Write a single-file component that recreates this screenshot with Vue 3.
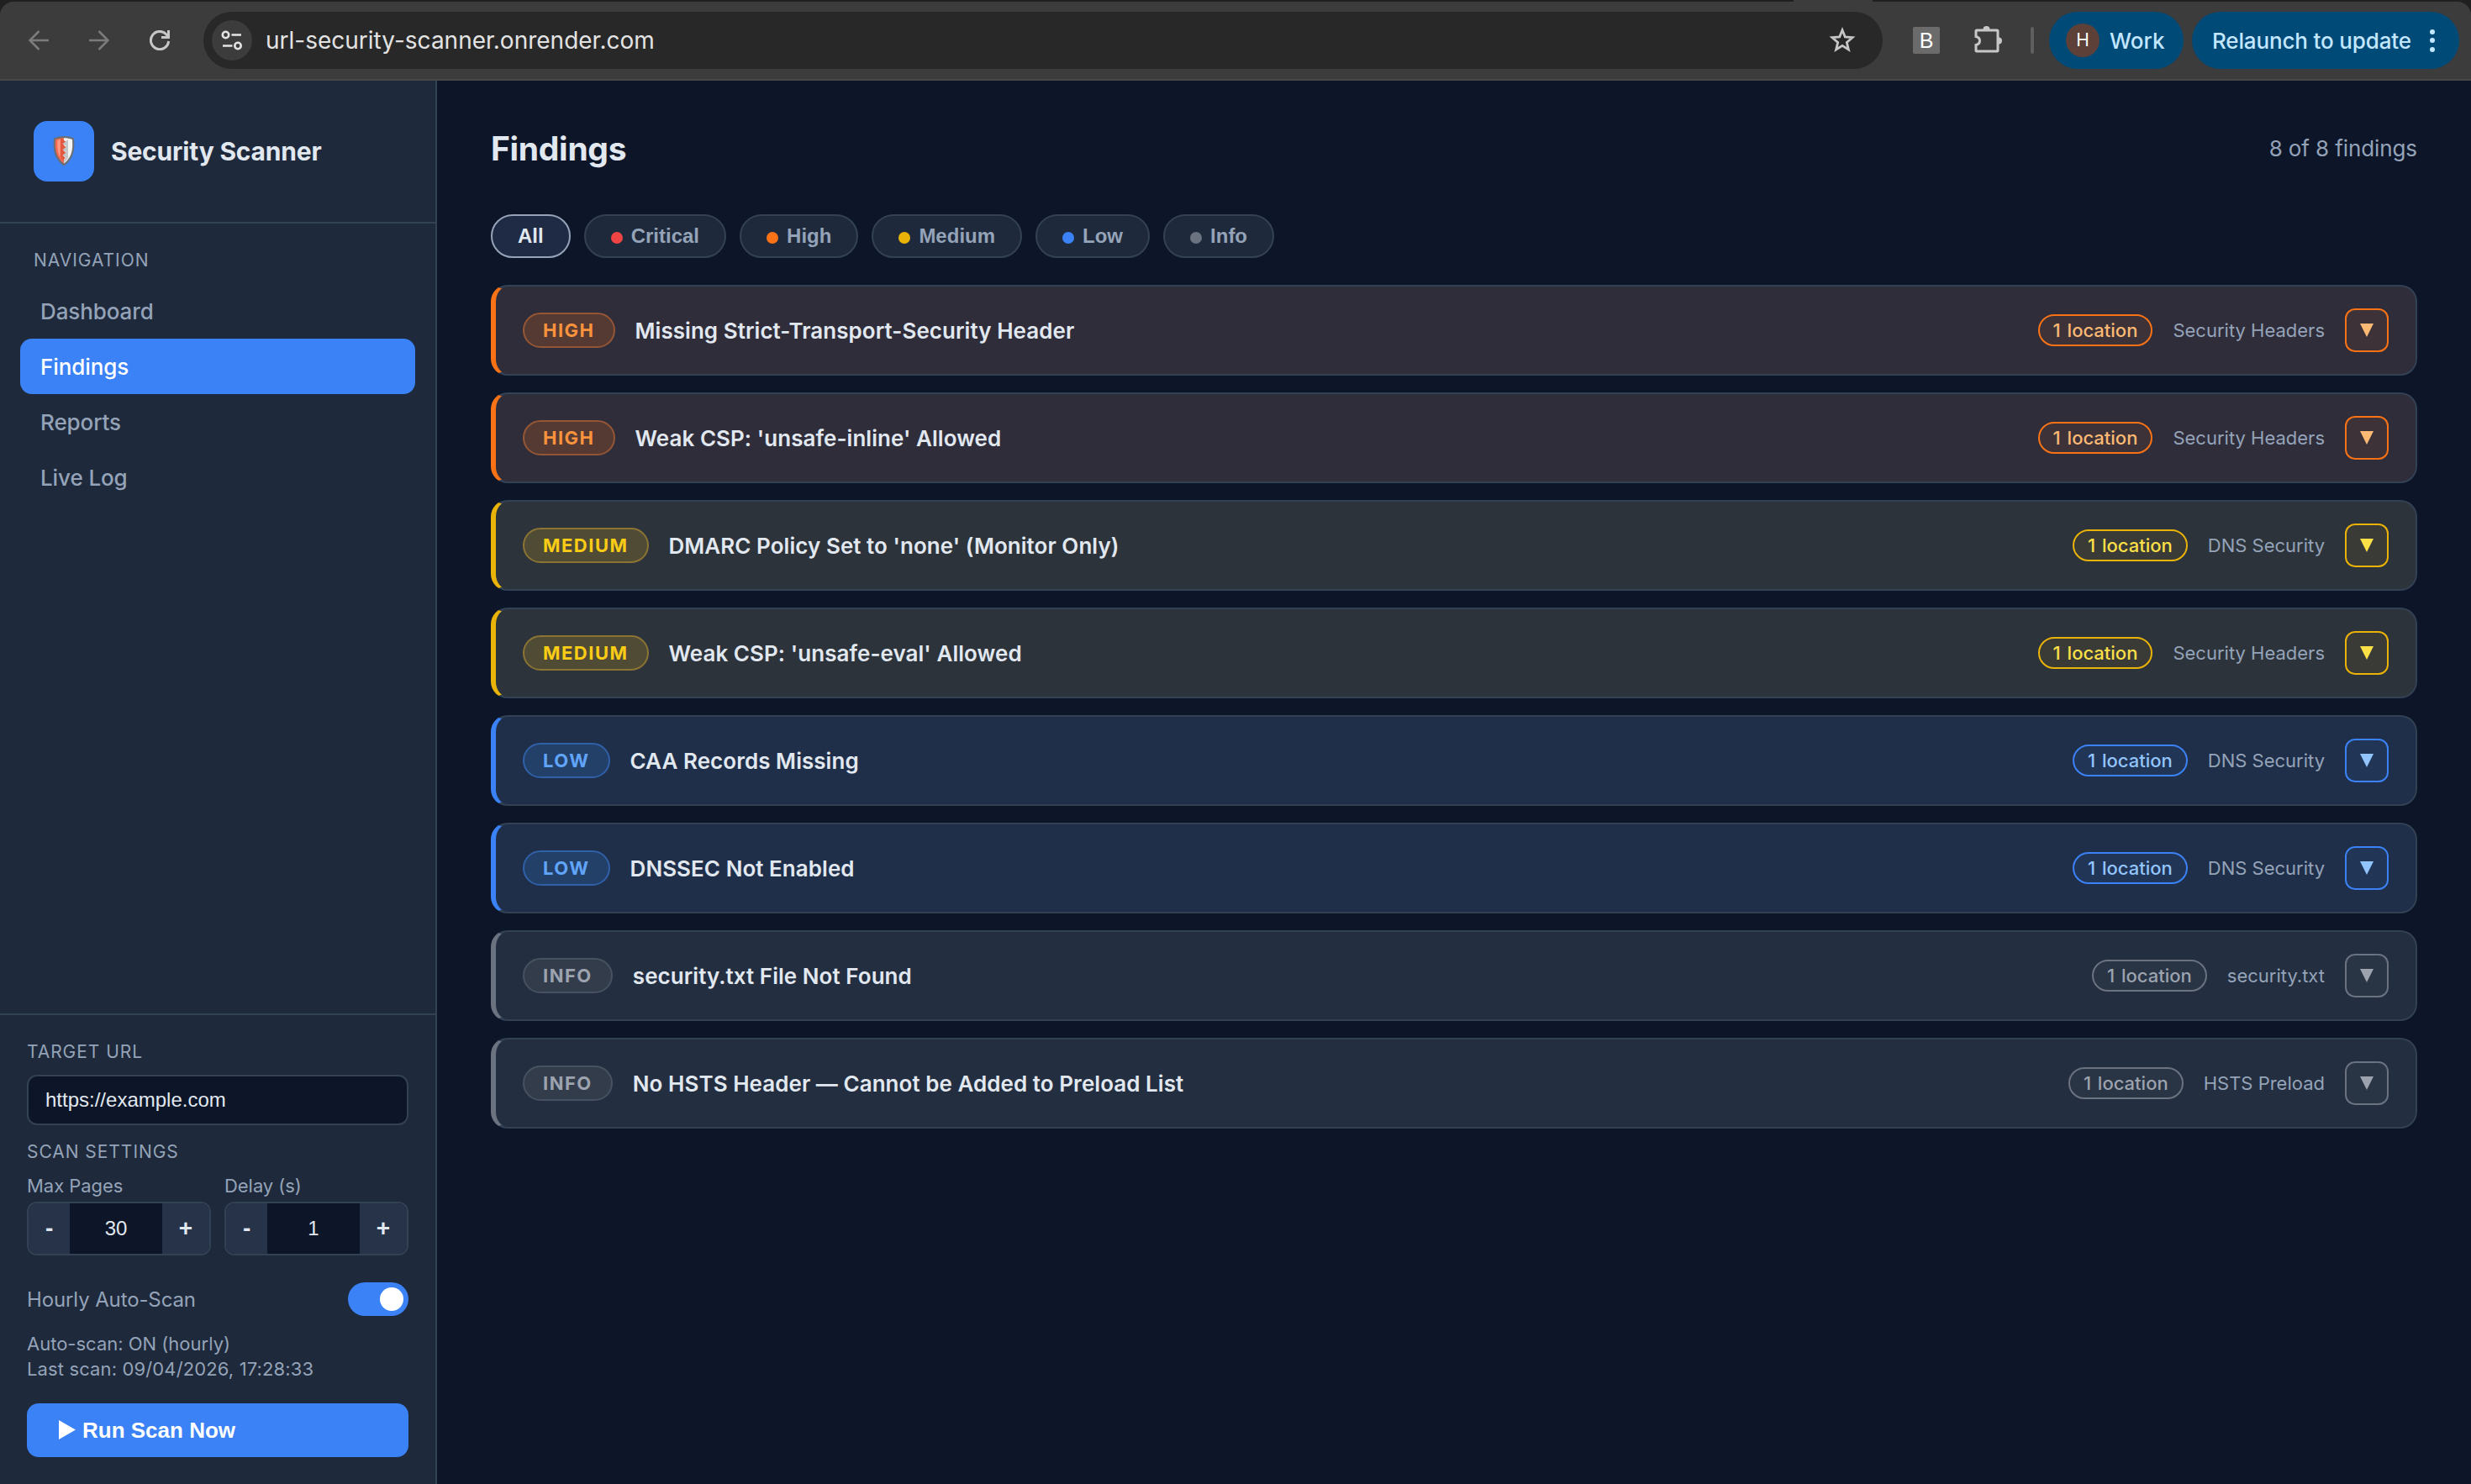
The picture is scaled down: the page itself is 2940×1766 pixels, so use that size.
<script setup>
import { ref } from 'vue'

const navItems = ['Dashboard', 'Findings', 'Reports', 'Live Log']
const activeNav = ref('Findings')

const filters = [
  { label: 'All', tone: '' },
  { label: 'Critical', tone: 'critical' },
  { label: 'High', tone: 'high' },
  { label: 'Medium', tone: 'medium' },
  { label: 'Low', tone: 'low' },
  { label: 'Info', tone: 'info' },
]
const activeFilter = ref('All')

const findings = [
  { severity: 'high', title: 'Missing Strict-Transport-Security Header', category: 'Security Headers' },
  { severity: 'high', title: "Weak CSP: 'unsafe-inline' Allowed", category: 'Security Headers' },
  { severity: 'medium', title: "DMARC Policy Set to 'none' (Monitor Only)", category: 'DNS Security' },
  { severity: 'medium', title: "Weak CSP: 'unsafe-eval' Allowed", category: 'Security Headers' },
  { severity: 'low', title: 'CAA Records Missing', category: 'DNS Security' },
  { severity: 'low', title: 'DNSSEC Not Enabled', category: 'DNS Security' },
  { severity: 'info', title: 'security.txt File Not Found', category: 'security.txt' },
  { severity: 'info', title: 'No HSTS Header — Cannot be Added to Preload List', category: 'HSTS Preload' },
]

const steppers = [
  { label: 'Max Pages', value: 30 },
  { label: 'Delay (s)', value: 1 },
]
</script>

<template>
  <div class="window">
    <header class="chrome">
      <div class="tab-strip"><span class="strip-left"></span><span class="strip-right"></span></div>
      <div class="toolbar">
        <svg class="tool-icon back" viewBox="0 0 24 24"><path d="M24 12H2M12.5 1L1.5 12l11 11" /></svg>
        <svg class="tool-icon forward" viewBox="0 0 24 24"><path d="M0 12h22M11.5 1l11 11-11 11" /></svg>
        <svg class="tool-icon reload" viewBox="0 0 24 24"><path d="M22.6 13A10.6 10.6 0 1 1 20 5L22 7.500" /><path d="M22.500 0v8.500H14" /></svg>
        <div class="omnibox">
          <span class="site-info">
            <svg viewBox="0 0 26 26"><circle cx="5.500" cy="6.500" r="3.700" /><path d="M12.500 6.500H24M2 19.500h11.500" /><circle cx="20" cy="19.500" r="3.700" /></svg>
          </span>
          <span class="address">url-security-scanner.onrender.com</span>
          <svg class="star" viewBox="0 0 32 32"><path d="M16 3.800l3.300 8.200 8.700.7-6.700 5.700 2.100 8.600-7.400-4.600-7.400 4.600 2.100-8.600L4 12.700l8.700-.7z" /></svg>
        </div>
        <span class="ext-b">B</span>
        <svg class="puzzle" viewBox="0 0 34 34"><path class="piece" d="M4 6h24a1 1 0 0 1 1 1v23a1 1 0 0 1-1 1H4a1 1 0 0 1-1-1v-6.500c6-1.500 6-8.500 0-10V7a1 1 0 0 1 1-1z" /><path class="knob-fill" d="M11.500 5a4 4 0 0 1 8 0zM30 14.500a4 4 0 0 1 0 8z" /></svg>
        <span class="divider"></span>
        <div class="profile"><span class="avatar">H</span><span class="profile-name">Work</span></div>
        <div class="relaunch"><span class="relaunch-text">Relaunch to update</span><span class="dots"><i></i><i></i><i></i></span></div>
      </div>
    </header>

    <div class="app">
      <aside class="sidebar">
        <div class="brand">
          <div class="logo">
            <svg viewBox="0 0 26 36">
              <path fill="#6b6f76" d="M13 0c4 0 8.500.8 12 2.500 1.500 15-1 25-12 33C2 27.500-.5 17.500 1 2.500 4.500.8 9 0 13 0z" />
              <path fill="#f4f4f4" d="M13 2.200c3.500 0 7 .6 10 1.800 1 13-1 21.800-10 28.600z" />
              <path fill="#f4694f" d="M13 2.200c-3.500 0-7 .6-10 1.800-1 13 1 21.800 10 28.600z" />
              <path fill="#ff9a80" d="M5.500 5c1.500-.6 2.500-.8 3.500-.9L8.500 25c-3-5-3.600-11-3-20z" />
              <path fill="#c3c6c9" d="M16 5.500l-5.500 3L16 12l-5.500 3.500L16 19l-5.500 3.500L16 26l-3 2.500V32l5-6V4z" />
              <path fill="#e25840" d="M10.500 3l4.500 3.500-4 3 4.500 3.500-4.500 3.500 4.500 3-4.500 3.500 4 3L11.500 29 9 24V3z" />
            </svg>
          </div>
          <span class="brand-name">Security Scanner</span>
        </div>

        <nav class="nav">
          <div class="section-label nav-label">NAVIGATION</div>
          <a v-for="item in navItems" :key="item" class="nav-item" :class="{ active: item === activeNav }" @click="activeNav = item">{{ item }}</a>
        </nav>

        <div class="controls">
          <div class="section-label">TARGET URL</div>
          <div class="url-input">https://example.com</div>
          <div class="section-label settings-label">SCAN SETTINGS</div>
          <div class="stepper-row">
            <div v-for="s in steppers" :key="s.label" class="stepper-field">
              <span class="stepper-label">{{ s.label }}</span>
              <div class="stepper">
                <span class="step-btn">-</span>
                <span class="step-value">{{ s.value }}</span>
                <span class="step-btn">+</span>
              </div>
            </div>
          </div>
          <div class="auto-row">
            <span class="auto-label">Hourly Auto-Scan</span>
            <span class="toggle"><span class="knob"></span></span>
          </div>
          <div class="status">
            <div class="status-mode">Auto-scan: ON (hourly)</div>
            <div class="status-last">Last scan: 09/04/2026, 17:28:33</div>
          </div>
          <div class="run">
            <svg viewBox="0 0 20 23"><path d="M0 0l20 11.500L0 23z" /></svg>
            <span>Run Scan Now</span>
          </div>
        </div>
      </aside>

      <main class="main">
        <div class="head">
          <h1>Findings</h1>
          <span class="count">8 of 8 findings</span>
        </div>
        <div class="filters">
          <span v-for="f in filters" :key="f.label" class="filter" :class="{ active: f.label === activeFilter }" @click="activeFilter = f.label">
            <i v-if="f.tone" class="dot" :class="f.tone"></i>{{ f.label }}
          </span>
        </div>
        <div class="list">
          <article v-for="f in findings" :key="f.title" class="card" :class="f.severity">
            <span class="badge">{{ f.severity.toUpperCase() }}</span>
            <span class="title">{{ f.title }}</span>
            <span class="location">1 location</span>
            <span class="category">{{ f.category }}</span>
            <span class="expand"><svg viewBox="0 0 16 16"><path d="M0 0h16L8 16z" /></svg></span>
          </article>
        </div>
      </main>
    </div>
  </div>
</template>

<style>
body {
  margin: 0;
  background: #0d1628;
}
</style>

<style scoped>
.window {
  width: 2940px;
  height: 1766px;
  display: flex;
  flex-direction: column;
  overflow: hidden;
  font-family: Inter, 'Liberation Sans', sans-serif;
  color: #e2e8f0;
  white-space: nowrap;
}
.window * {
  box-sizing: border-box;
}

/* Browser toolbar */
.chrome {
  height: 96px;
  flex: none;
  background: #202020;
  display: flex;
  flex-direction: column;
}
.tab-strip {
  height: 2px;
  flex: none;
  display: flex;
  justify-content: space-between;
  background: #3c3c3c;
}
.strip-left {
  width: 2134px;
  background: #202020;
}
.strip-right {
  width: 712px;
  background: #202020;
}
.toolbar {
  height: 94px;
  display: flex;
  align-items: center;
  background: #3c3c3c;
  border-radius: 16px 16px 0 0;
  border-bottom: 2px solid #484848;
  padding: 0 14px 0 34px;
}
.tool-icon {
  width: 24px;
  height: 24px;
  flex: none;
  margin-right: 48px;
  fill: none;
  stroke: #7b7b7b;
  stroke-width: 2.6;
}
.tool-icon.reload {
  stroke: #c7c7c7;
  stroke-width: 3;
  margin-right: 40px;
}
.omnibox {
  width: 1998px;
  height: 68px;
  flex: none;
  border-radius: 34px;
  background: #282828;
  display: flex;
  align-items: center;
  padding: 0 32px 0 10px;
}
.site-info {
  width: 48px;
  height: 48px;
  border-radius: 50%;
  background: #3c3c3c;
  display: flex;
  align-items: center;
  justify-content: center;
}
.site-info svg {
  width: 26px;
  height: 26px;
  fill: none;
  stroke: #e3e3e3;
  stroke-width: 2.6;
}
.address {
  flex: 1;
  margin-left: 16px;
  font-size: 28px;
  color: #e3e3e3;
}
.star {
  width: 32px;
  height: 32px;
  fill: none;
  stroke: #c7c7c7;
  stroke-width: 2.8;
}
.ext-b {
  width: 32px;
  height: 32px;
  flex: none;
  margin-left: 36px;
  background: #6b6b6b;
  border-radius: 2px;
  color: #fff;
  font: 500 25px/32px 'Liberation Sans', sans-serif;
  text-align: center;
}
.puzzle {
  width: 34px;
  height: 34px;
  flex: none;
  margin: -2px 34px 0 40px;
}
.piece {
  fill: none;
  stroke: #c7c7c7;
  stroke-width: 3;
}
.knob-fill {
  fill: #c7c7c7;
}
.divider {
  width: 4px;
  height: 32px;
  flex: none;
  border-radius: 2px;
  background: #5f5f5f;
}
.profile {
  width: 160px;
  height: 68px;
  flex: none;
  margin-left: 18px;
  border-radius: 34px;
  background: #004a77;
  display: flex;
  align-items: center;
  padding-left: 20px;
  color: #c2e7ff;
  font-size: 26px;
  font-weight: 500;
}
.avatar {
  width: 40px;
  height: 40px;
  border-radius: 50%;
  background: #5d4037;
  color: #fff;
  font-size: 21px;
  font-weight: 400;
  line-height: 40px;
  text-align: center;
  margin-right: 12px;
}
.relaunch {
  width: 318px;
  height: 68px;
  flex: none;
  margin-left: 10px;
  border-radius: 34px;
  background: #004a77;
  display: flex;
  align-items: center;
  justify-content: space-between;
  padding: 0 29px 0 24px;
  color: #c2e7ff;
  font-size: 26px;
  font-weight: 500;
  letter-spacing: -0.15px;
}
.dots {
  display: flex;
  flex-direction: column;
  gap: 4.500px;
}
.dots i {
  width: 6px;
  height: 6px;
  border-radius: 50%;
  background: #c2e7ff;
}

/* Sidebar */
.app {
  flex: 1;
  display: flex;
  min-height: 0;
}
.sidebar {
  width: 520px;
  flex: none;
  background: #1e293b;
  border-right: 2px solid #334155;
  display: flex;
  flex-direction: column;
}
.brand {
  height: 170px;
  display: flex;
  align-items: center;
  gap: 20px;
  padding: 0 40px;
  border-bottom: 2px solid #334155;
}
.logo {
  width: 72px;
  height: 72px;
  border-radius: 16px;
  background: #3b82f6;
  display: flex;
  align-items: center;
  justify-content: center;
}
.logo svg {
  width: 26px;
  height: 36px;
}
.brand-name {
  font-size: 30px;
  font-weight: 700;
  letter-spacing: -0.2px;
}
.nav {
  flex: 1;
  padding: 28px 24px 0;
}
.section-label {
  font-size: 21px;
  line-height: 32px;
  letter-spacing: 0.95px;
  color: #94a3b8;
}
.nav-label {
  padding-left: 16px;
  margin-bottom: 11px;
}
.nav-item {
  display: block;
  height: 66px;
  line-height: 68px;
  padding-left: 24px;
  border-radius: 14px;
  font-size: 26px;
  font-weight: 500;
  letter-spacing: -0.1px;
  color: #94a3b8;
}
.nav-item.active {
  background: #3b82f6;
  color: #fff;
}
.controls {
  height: 560px;
  flex: none;
  border-top: 2px solid #334155;
  padding: 28px 32px 0;
}
.url-input {
  height: 60px;
  margin-top: 11px;
  border: 2px solid #334155;
  border-radius: 12px;
  background: #0d1628;
  padding-left: 20px;
  font: 24px/56px 'Liberation Sans', Arial, sans-serif;
  color: #e2e8f0;
}
.settings-label {
  margin-top: 16px;
}
.stepper-row {
  display: flex;
  gap: 16px;
  margin-top: 10px;
}
.stepper-field {
  flex: 1;
}
.stepper-label {
  display: block;
  font-size: 22px;
  line-height: 28px;
  letter-spacing: -0.05px;
  color: #94a3b8;
}
.stepper {
  height: 64px;
  margin-top: 5px;
  display: flex;
  border: 2px solid #334155;
  border-radius: 12px;
  overflow: hidden;
  background: #0d1628;
  font: 24px/60px 'Liberation Sans', Arial, sans-serif;
}
.step-btn {
  padding: 0 20px;
  background: #263348;
  font-size: 28px;
  font-weight: 700;
}
.step-value {
  flex: 1;
  text-align: center;
}
.auto-row {
  height: 40px;
  margin-top: 32px;
  display: flex;
  align-items: center;
  justify-content: space-between;
}
.auto-label {
  font-size: 24px;
  letter-spacing: -0.12px;
  color: #94a3b8;
}
.toggle {
  width: 72px;
  height: 40px;
  border-radius: 20px;
  background: #3b82f6;
  display: flex;
  align-items: center;
  justify-content: flex-end;
  padding-right: 6px;
}
.knob {
  width: 28px;
  height: 28px;
  border-radius: 50%;
  background: #fff;
}
.status {
  margin-top: 18px;
  font-size: 22px;
  line-height: 30px;
  color: #94a3b8;
}
.status-last {
  letter-spacing: 0.13px;
}
.run {
  height: 64px;
  margin-top: 26px;
  border-radius: 14px;
  background: #3b82f6;
  color: #fff;
  display: flex;
  align-items: center;
  padding-left: 38px;
  gap: 8px;
  font: 700 26px/64px 'Liberation Sans', Arial, sans-serif;
}
.run svg {
  width: 20px;
  height: 23px;
  margin-top: -2px;
  fill: #fff;
}

/* Findings */
.main {
  flex: 1;
  background: #0d1628;
  padding: 51px 64px 0;
}
.head {
  height: 58px;
  display: flex;
  align-items: center;
  justify-content: space-between;
}
h1 {
  margin: 0;
  font-size: 39px;
  font-weight: 700;
  letter-spacing: -0.3px;
}
.count {
  font-size: 26px;
  letter-spacing: -0.1px;
  color: #94a3b8;
}
.filters {
  display: flex;
  gap: 16px;
  margin-top: 50px;
}
.filter {
  height: 52px;
  display: flex;
  align-items: center;
  padding: 0 30px 1px;
  border: 2px solid #334155;
  border-radius: 26px;
  background: #1e293b;
  color: #94a3b8;
  font: 700 24px/48px 'Liberation Sans', Arial, sans-serif;
}
.filter.active {
  background: #1f2a44;
  border-color: #94a3b8;
  color: #e2e8f0;
}
.dot {
  width: 14px;
  height: 14px;
  border-radius: 50%;
  margin: 5px 10px 0 0;
}
.dot.critical { background: #ef4444; }
.dot.high { background: #f97316; }
.dot.medium { background: #eab308; }
.dot.low { background: #3b82f6; }
.dot.info { background: #6b7280; }

.list {
  display: flex;
  flex-direction: column;
  gap: 20px;
  margin-top: 32px;
}
.card {
  height: 108px;
  display: flex;
  align-items: center;
  gap: 24px;
  padding: 0 32px;
  border: 2px solid #334155;
  border-left: 6px solid var(--line);
  border-radius: 20px;
  background: var(--bg);
}
.card.high { --line: #f97316; --bg: #2f2d3a; --badge-bg: #553a34; --badge-line: #945634; --badge-text: #fb923c; --chip-bg: #3c3238; --chip-text: #fdba74; }
.card.medium { --line: #eab308; --bg: #2c333b; --badge-bg: #4f4b35; --badge-line: #8b7434; --badge-text: #facc15; --chip-bg: #3a3a37; --chip-text: #fde047; }
.card.low { --line: #3b82f6; --bg: #1f2f4a; --badge-bg: #234069; --badge-line: #3060a8; --badge-text: #60a5fa; --chip-bg: #213557; --chip-text: #93c5fd; }
.card.info { --line: #6b7280; --bg: #232e40; --badge-bg: #323c4b; --badge-line: #475260; --badge-text: #9ca3af; --chip-bg: #293445; --chip-text: #9ca3af; }
.badge {
  height: 42px;
  border: 2px solid var(--badge-line);
  border-radius: 21px;
  background: var(--badge-bg);
  color: var(--badge-text);
  padding: 0 22px;
  font-size: 22px;
  line-height: 38px;
  font-weight: 700;
  letter-spacing: 1.5px;
}
.title {
  flex: 1;
  font-size: 26px;
  font-weight: 600;
  letter-spacing: 0.04px;
}
.location {
  height: 38px;
  border: 2px solid var(--line);
  border-radius: 19px;
  background: var(--chip-bg);
  color: var(--chip-text);
  padding: 0 16px;
  font-size: 22px;
  line-height: 34px;
  font-weight: 500;
  word-spacing: 2px;
}
.category {
  font-size: 22px;
  color: #94a3b8;
}
.expand {
  width: 52px;
  height: 52px;
  border: 2px solid var(--line);
  border-radius: 12px;
  background: var(--chip-bg);
  display: flex;
  align-items: center;
  justify-content: center;
}
.expand svg {
  width: 16px;
  height: 16px;
  fill: var(--chip-text);
}
</style>
